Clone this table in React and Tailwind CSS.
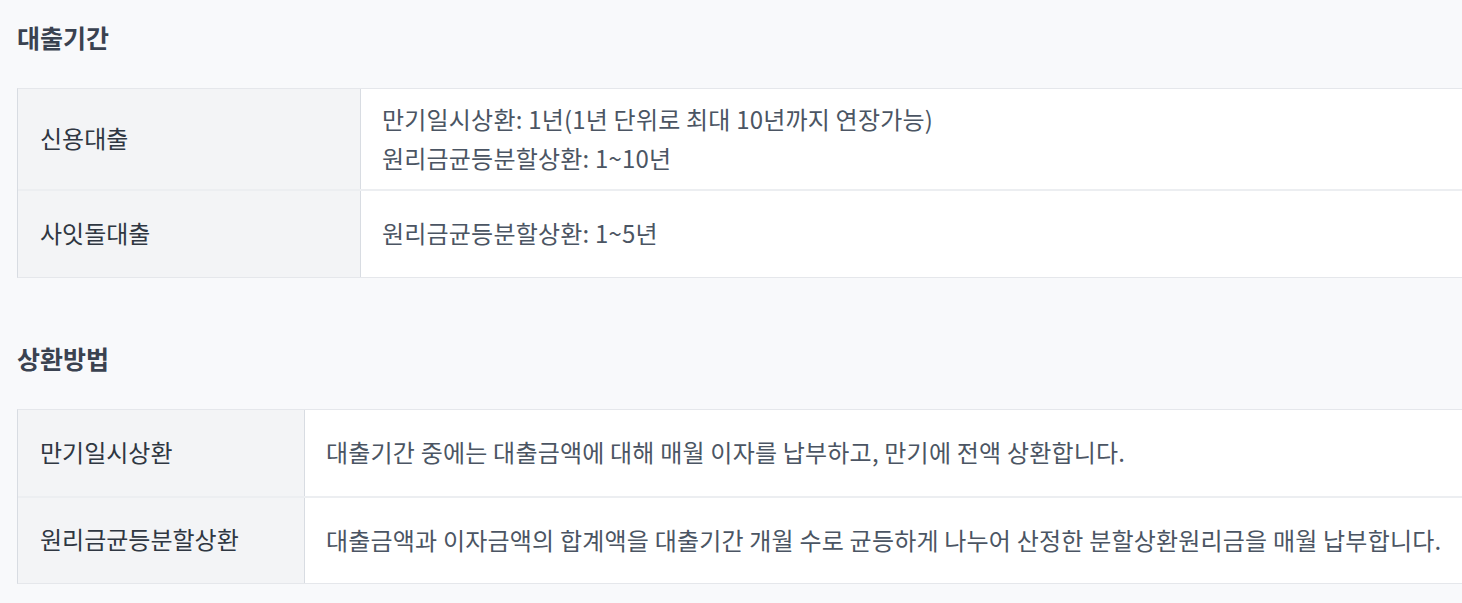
import React from 'react';

const sections = [
  {
    title: '대출기간',
    thWidth: 'w-[343px]',
    rows: [
      {
        label: '신용대출',
        lines: ['만기일시상환: 1년(1년 단위로 최대 10년까지 연장가능)', '원리금균등분할상환: 1~10년'],
        height: 'h-[100px]',
      },
      { label: '사잇돌대출', lines: ['원리금균등분할상환: 1~5년'], height: 'h-[88px]' },
    ],
  },
  {
    title: '상환방법',
    thWidth: 'w-[287px]',
    rows: [
      {
        label: '만기일시상환',
        lines: ['대출기간 중에는 대출금액에 대해 매월 이자를 납부하고, 만기에 전액 상환합니다.'],
        height: 'h-[86px]',
      },
      {
        label: '원리금균등분할상환',
        lines: ['대출금액과 이자금액의 합계액을 대출기간 개월 수로 균등하게 나누어 산정한 분할상환원리금을 매월 납부합니다.'],
        height: 'h-[87px]',
      },
    ],
  },
];

const InfoTable = ({ section }) => (
  <div className="w-[1460px] border-y border-l border-y-[#e5e7eb] border-l-[#d8dce2] bg-white">
    {section.rows.map((row, i) => (
      <div
        key={row.label}
        className={`flex ${row.height} ${i > 0 ? 'border-t-2 border-[#eceef1]' : ''}`}
      >
        <div className={`${section.thWidth} shrink-0 flex items-center bg-[#f3f4f6] border-r border-[#d8dce2] pl-[22px] pb-[3px] text-[#2f3742]`}>
          {row.label}
        </div>
        <div className="flex-1 flex flex-col justify-center pl-[21px] pb-[3px] text-[#4b5563] tracking-[0.2px]">
          {row.lines.map((line) => (
            <p key={line} className="leading-[39px]">{line}</p>
          ))}
        </div>
      </div>
    ))}
  </div>
);

export default function App() {
  return (
    <div
      className="min-h-screen w-full overflow-hidden bg-[#f8f9fb] pl-[17px] pt-[19px] text-[24px]"
      style={{ fontFamily: '"Noto Sans CJK KR", "Noto Sans", sans-serif' }}
    >
      {sections.map((section, idx) => (
        <section key={section.title} className={idx > 0 ? 'mt-[62px]' : ''}>
          <h2 className="text-[25px] leading-[36px] font-bold text-[#3a4250] mb-[33px]">
            {section.title}
          </h2>
          <InfoTable section={section} />
        </section>
      ))}
    </div>
  );
}
